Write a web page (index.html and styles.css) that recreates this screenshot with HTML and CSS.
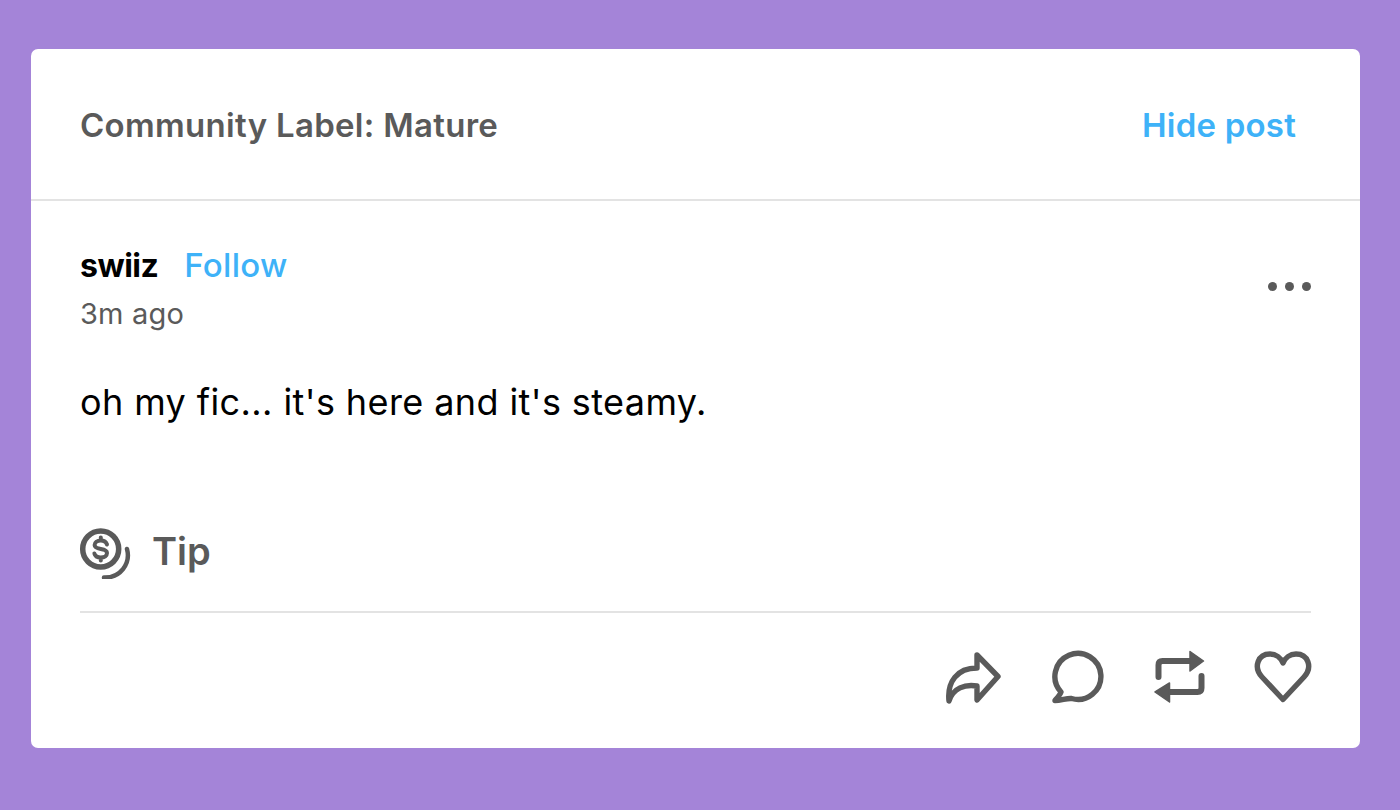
FILE: index.html
```html
<!DOCTYPE html>
<html lang="en">
<head>
<meta charset="utf-8">
<title>Post</title>
<link rel="stylesheet" href="styles.css">
</head>
<body>
<main class="card">
  <header class="label-bar">
    <span class="label">Community Label: Mature</span>
    <a class="link hide">Hide post</a>
  </header>
  <section class="post">
    <div class="post-head">
      <div>
        <div class="byline"><span class="author">swiiz</span><a class="link follow">Follow</a></div>
        <div class="time">3m ago</div>
      </div>
      <div class="more"><i></i><i></i><i></i></div>
    </div>
    <p class="body-text">oh my fic... it's here and it's steamy.</p>
    <div class="tip">
      <svg class="tip-icon" width="54" height="54" viewBox="78 522 54 54" fill="none" stroke="#5a5a5a" stroke-linecap="round">
        <circle cx="100.7" cy="546" r="18" stroke-width="5.5"/>
        <path d="M127 546 C131 561 120 575 104 574.5" stroke-width="4.5"/>
        <path d="M107 541.5 C106 538.5 103.5 537.5 100.8 537.5 C97 537.5 94.6 539.5 94.6 542 C94.6 548 107 544 107 550 C107 552.7 104.5 554.5 100.8 554.5 C97.5 554.5 95 553 94.4 550.5 M100.8 534.5 V537.5 M100.8 554.5 V557.5" stroke-width="4"/>
      </svg>
      <span class="tip-text">Tip</span>
    </div>
    <div class="actions">
      <svg class="icon share" width="58" height="56" viewBox="945 648 58 56" fill="none" stroke="#5a5a5a" stroke-width="5.4" stroke-linejoin="round" stroke-linecap="round">
        <path d="M977 653 L998 674.5 L977 698 V684 C965 682 953 686 949 699 C947 680 957 666 977 666 Z"/>
      </svg>
      <svg class="icon comment" width="54" height="54" viewBox="1051 649 54 54" fill="none" stroke="#5a5a5a" stroke-width="5.4" stroke-linejoin="round" stroke-linecap="round">
        <path d="M1061 691 A23 23 0 1 1 1071.5 697.5 C1067 697 1061 699.5 1055 699.5 C1058 696 1060 694 1061 691 Z"/>
      </svg>
      <svg class="icon repost" width="52" height="54" viewBox="1153 649 52 54">
        <path d="M1158.5 676 V664 Q1158.5 660 1162.5 660 H1192 M1201.5 675 V687 Q1201.5 691 1197.5 691 H1168" fill="none" stroke="#5a5a5a" stroke-width="6" stroke-linecap="round"/>
        <path d="M1190 650.5 L1203.5 660 L1190 670 Z M1169.5 682 L1155 691 L1169.5 701 Z" fill="#5a5a5a" stroke="#5a5a5a" stroke-width="1.5" stroke-linejoin="round"/>
      </svg>
      <svg class="icon heart" width="58" height="54" viewBox="1254 650 58 54" fill="none" stroke="#5a5a5a" stroke-width="5.4" stroke-linejoin="round">
        <path d="M1283 699.5 L1262 677 C1253 667 1258 654 1270 654 C1276 654 1281 658 1283 663 C1285 658 1290 654 1296 654 C1308 654 1313 667 1304 677 Z"/>
      </svg>
    </div>
  </section>
</main>
</body>
</html>
```

FILE: styles.css
```css
* { box-sizing: border-box; }

html, body { height: 100%; }

body {
  margin: 0;
  padding: 49px 40px 0 31px;
  background: #a484d8;
  font-family: Inter, "Liberation Sans", sans-serif;
  overflow: hidden;
}

.card {
  width: 1329px;
  height: 699px;
  background: #fff;
  border-radius: 7px;
}

.label-bar {
  height: 152px;
  padding: 2px 64px 0 49px;
  display: flex;
  align-items: center;
  justify-content: space-between;
  border-bottom: 2px solid #e3e3e3;
  font-size: 33px;
  font-weight: 600;
  letter-spacing: 0.3px;
}

.label { color: #5a5a5a; }

.link { color: #3eb2f8; }

.hide { letter-spacing: 0.2px; }

.post { padding: 42px 49px 0; }

.post-head {
  display: flex;
  justify-content: space-between;
  align-items: flex-start;
}

.byline {
  display: flex;
  align-items: baseline;
  gap: 26px;
  font-size: 32px;
  line-height: 44px;
  letter-spacing: -0.5px;
}

.author { font-weight: 700; color: #000; }

.follow {
  font-size: 33px;
  font-weight: 500;
  letter-spacing: 0.3px;
}

.time {
  margin-top: 6px;
  font-size: 29px;
  line-height: 40px;
  letter-spacing: 0.2px;
  color: #5a5a5a;
}

.more {
  display: flex;
  gap: 8px;
  margin-top: 39px;
}

.more i {
  width: 9px;
  height: 9px;
  border-radius: 50%;
  background: #5a5a5a;
}

.body-text {
  margin: 43px 0 0;
  font-size: 36px;
  line-height: 50px;
  letter-spacing: 0.4px;
  color: #000;
}

.tip {
  margin-top: 96px;
  display: flex;
  align-items: center;
  gap: 20px;
  height: 56px;
}

.tip-icon { margin-left: -2px; margin-top: 2px; }

.tip-text {
  font-size: 38px;
  font-weight: 600;
  color: #5a5a5a;
}

.actions {
  margin-top: 32px;
  padding-top: 37px;
  border-top: 2px solid #e3e3e3;
  display: flex;
  justify-content: flex-end;
  align-items: flex-start;
}

.icon { display: block; flex: none; }

.comment { margin-left: 48px; }

.repost { margin-left: 48px; }

.heart { margin-left: 49px; margin-right: -1px; }
```
